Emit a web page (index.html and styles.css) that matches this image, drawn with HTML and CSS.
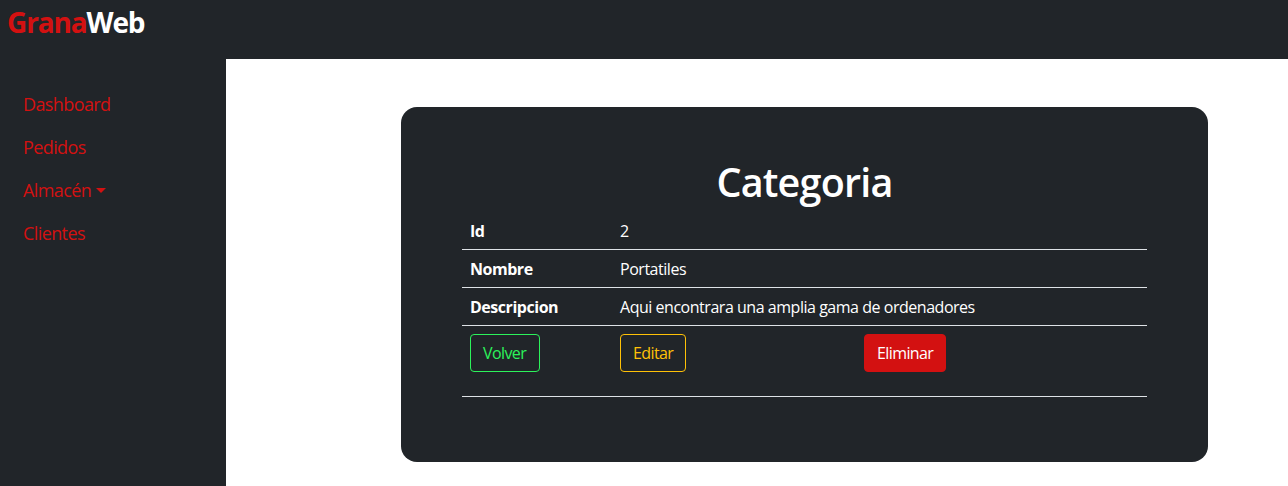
FILE: index.html
```html
<!DOCTYPE html>
<html lang="es">
<head>
<meta charset="utf-8">
<title>GranaWeb</title>
<link rel="stylesheet" href="styles.css">
</head>
<body>
<header class="topbar"><a class="brand"><span class="brand-red">Grana</span><span class="brand-white">Web</span></a></header>
<div class="layout">
  <nav class="sidebar">
    <a class="nav-link">Dashboard</a>
    <a class="nav-link">Pedidos</a>
    <a class="nav-link">Almacén<span class="caret"></span></a>
    <a class="nav-link">Clientes</a>
  </nav>
  <main class="content">
    <section class="card">
      <h1 class="title">Categoria</h1>
      <div class="row"><b>Id</b><span>2</span></div>
      <div class="row"><b>Nombre</b><span>Portatiles</span></div>
      <div class="row"><b>Descripcion</b><span>Aqui encontrara una amplia gama de ordenadores</span></div>
      <div class="row actions">
        <div><a class="btn btn-back">Volver</a></div>
        <div><a class="btn btn-edit">Editar</a></div>
        <div><a class="btn btn-delete">Eliminar</a></div>
      </div>
    </section>
  </main>
</div>
</body>
</html>
```
FILE: styles.css
```css
* { box-sizing: border-box; }
body {
  margin: 0;
  height: 486px;
  overflow: hidden;
  display: flex;
  flex-direction: column;
  background: #fff;
  color: #fff;
  font: 16px/24px "Segoe UI", "Open Sans", "Noto Sans", sans-serif;
  letter-spacing: -0.47px;
}
.topbar { height: 59px; flex: none; background: #212529; padding: 1px 7px; }
.brand { font-size: 28px; line-height: 42px; font-weight: 700; letter-spacing: -1.15px; }
.brand-red { color: #d31111; }
.layout { flex: 1; display: flex; min-height: 0; }
.sidebar {
  width: 226px;
  flex: none;
  background: #212529;
  padding: 24px 23px;
}
.nav-link {
  display: flex;
  align-items: center;
  height: 43px;
  color: #d31111;
  font-size: 18px;
  line-height: 27px;
  letter-spacing: -0.6px;
}
.caret {
  margin-left: 5px;
  border-top: 5.4px solid #d31111;
  border-left: 5.4px solid transparent;
  border-right: 5.4px solid transparent;
}
.content { flex: 1; padding: 48px 80px 24px 175px; }
.card {
  height: 355px;
  padding: 51px 61px 0;
  border-radius: 16px;
  background: #212529;
}
.title {
  margin: 0 0 6px;
  font-size: 39.5px;
  line-height: 48px;
  font-weight: 600;
  text-align: center;
  letter-spacing: -0.8px;
}
.row {
  display: grid;
  grid-template-columns: 150px 244px 1fr;
  height: 38px;
  border-bottom: 1px solid #dee2e6;
}
.row > * { padding: 7px 8px 6px; white-space: nowrap; }
.actions { height: 71px; }
.actions > * { padding-top: 8px; }
.btn {
  display: inline-block;
  height: 38px;
  padding: 6px 12px;
  border: 1px solid;
  border-radius: 4px;
  letter-spacing: -0.6px;
}
.btn-back { width: 70px; color: #2cf35b; }
.btn-edit { width: 66px; color: #ffc107; }
.btn-delete { width: 82px; color: #fff; background: #d31111; border-color: #d31111; }
```
